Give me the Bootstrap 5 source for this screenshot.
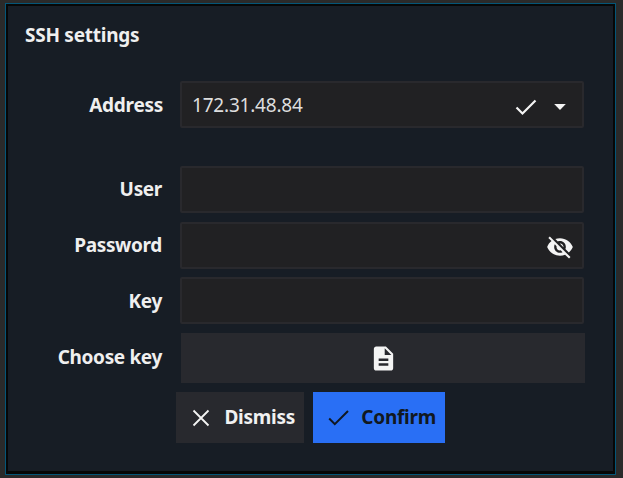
<!DOCTYPE html>
<html lang="en">
<head>
<meta charset="utf-8">
<meta name="viewport" content="width=device-width, initial-scale=1">
<title>SSH settings</title>
<link href="https://cdn.jsdelivr.net/npm/bootstrap@5.3.0/dist/css/bootstrap.min.css" rel="stylesheet">
<style>
body{background:#2a2a2a;font-family:"Noto Sans",sans-serif;font-size:19px;line-height:26px;color:#efefef;height:478px;overflow:hidden;padding:3px 7px 3px 5px}
.dialog{height:472px;border:1px solid #045678;background:#060707;padding:2px 2px 3px 2px}
.panel{height:465px;background:#171d25;padding:16px 26px 0 17px}
.title{font-size:19px;font-weight:700;line-height:26px;letter-spacing:-.26px;margin:0 0 33px}
.label-col{width:137px;margin-right:18px;padding-bottom:1px;font-weight:700;letter-spacing:-.34px;white-space:nowrap}
.wide .label-col{width:138px;margin-right:17px;padding-bottom:0;letter-spacing:-.28px}
.addr{letter-spacing:-.2px;color:#dedede}
.field{width:404px;height:47px;background:#212123;border:2px solid #29292d;border-radius:2px;padding:0 8px 0 10px}
.line{height:47px;margin-bottom:9px}
.line.wide{margin-bottom:38px}
.file{width:404px;height:50px;background:#28292e;margin-left:1px;padding-left:1px}
.choose{height:50px;margin:9px 0 9px}
.choose .label-col{padding-bottom:3px}
.act{height:51px;border:0;border-radius:0;padding:0 9px 0 15px;font-size:19px;font-weight:700;letter-spacing:-.26px;color:#f1f1f1;background:#28292e}
.dismiss{width:128px}
.confirm{width:132px;background:#296ff5;color:#111820}
.acts{gap:9px;margin-left:151px}
.tick{margin-right:9px}
.caret{margin-right:2px}
svg{display:block;flex:none}
</style>
</head>
<body>
<main class="dialog"><form class="panel">
<h1 class="title">SSH settings</h1>
<div class="line wide d-flex align-items-center"><label class="label-col text-end">Address</label>
<div class="field d-flex align-items-center"><span class="me-auto fw-normal addr">172.31.48.84</span>
<svg class="tick" width="24" height="24" viewBox="0 0 24 24" fill="none" stroke="#f4f4f4" stroke-width="2.200"><path d="M1.500 14.500 7.500 20.500 20.500 7.500"/></svg>
<svg class="caret" width="24" height="24" viewBox="0 0 24 24"><path d="M6.200 11h11.600L12 17z" fill="#f4f4f4"/></svg></div></div>
<div class="line d-flex align-items-center"><label class="label-col text-end">User</label><div class="field"></div></div>
<div class="line mb-2 d-flex align-items-center"><label class="label-col text-end">Password</label><div class="field d-flex align-items-center justify-content-end">
<svg width="28" height="28" viewBox="0 -.800 24 24" fill="#f4f4f4"><path d="M12 7c2.760 0 5 2.240 5 5 0 .650-.130 1.260-.360 1.830l2.920 2.920c1.510-1.260 2.700-2.890 3.430-4.750-1.730-4.390-6-7.500-11-7.500-1.400 0-2.740.250-3.980.700l2.160 2.160C10.740 7.130 11.350 7 12 7zM2 4.270l2.280 2.280.460.460C3.080 8.300 1.780 10.020 1 12c1.730 4.390 6 7.500 11 7.500 1.550 0 3.030-.300 4.380-.840l.420.420L19.730 22 21 20.730 3.270 3 2 4.270zM7.530 9.800l1.550 1.550c-.050.210-.080.430-.080.650 0 1.660 1.340 3 3 3 .220 0 .440-.030.650-.080l1.550 1.550c-.670.330-1.410.530-2.200.530-2.760 0-5-2.240-5-5 0-.790.200-1.530.530-2.200zm4.310-.780 3.150 3.150.020-.160c0-1.660-1.340-3-3-3l-.170.010z"/></svg></div></div>
<div class="line mb-0 d-flex align-items-center"><label class="label-col text-end pb-0">Key</label><div class="field"></div></div>
<div class="choose d-flex align-items-center"><label class="label-col text-end">Choose key</label>
<div class="file d-flex align-items-center justify-content-center"><svg width="29" height="29" viewBox="0 0 24 24" fill="#f4f4f4"><path d="M14 2H6c-1.100 0-1.990.900-1.990 2L4 20c0 1.100.890 2 1.990 2H18c1.100 0 2-.900 2-2V8l-6-6zm2 16H8v-2h8v2zm0-4H8v-2h8v2zm-3-5V3.500L18.500 9H13z"/></svg></div></div>
<div class="acts d-flex">
<button type="button" class="btn act dismiss d-flex align-items-center justify-content-between"><svg width="20" height="20" viewBox="0 0 20 20" fill="none" stroke="#f4f4f4" stroke-width="1.800"><path d="M2.500 2.500l15 15m0-15-15 15"/></svg>Dismiss</button>
<button type="button" class="btn act confirm d-flex align-items-center justify-content-between"><svg width="22" height="22" viewBox="0 0 22 22" fill="none" stroke="#111820" stroke-width="2"><path d="M1.200 11.500 6.800 17.200 20 4"/></svg>Confirm</button>
</div>
</form></main>
<script src="https://cdn.jsdelivr.net/npm/bootstrap@5.3.0/dist/js/bootstrap.bundle.min.js"></script>
</body>
</html>
